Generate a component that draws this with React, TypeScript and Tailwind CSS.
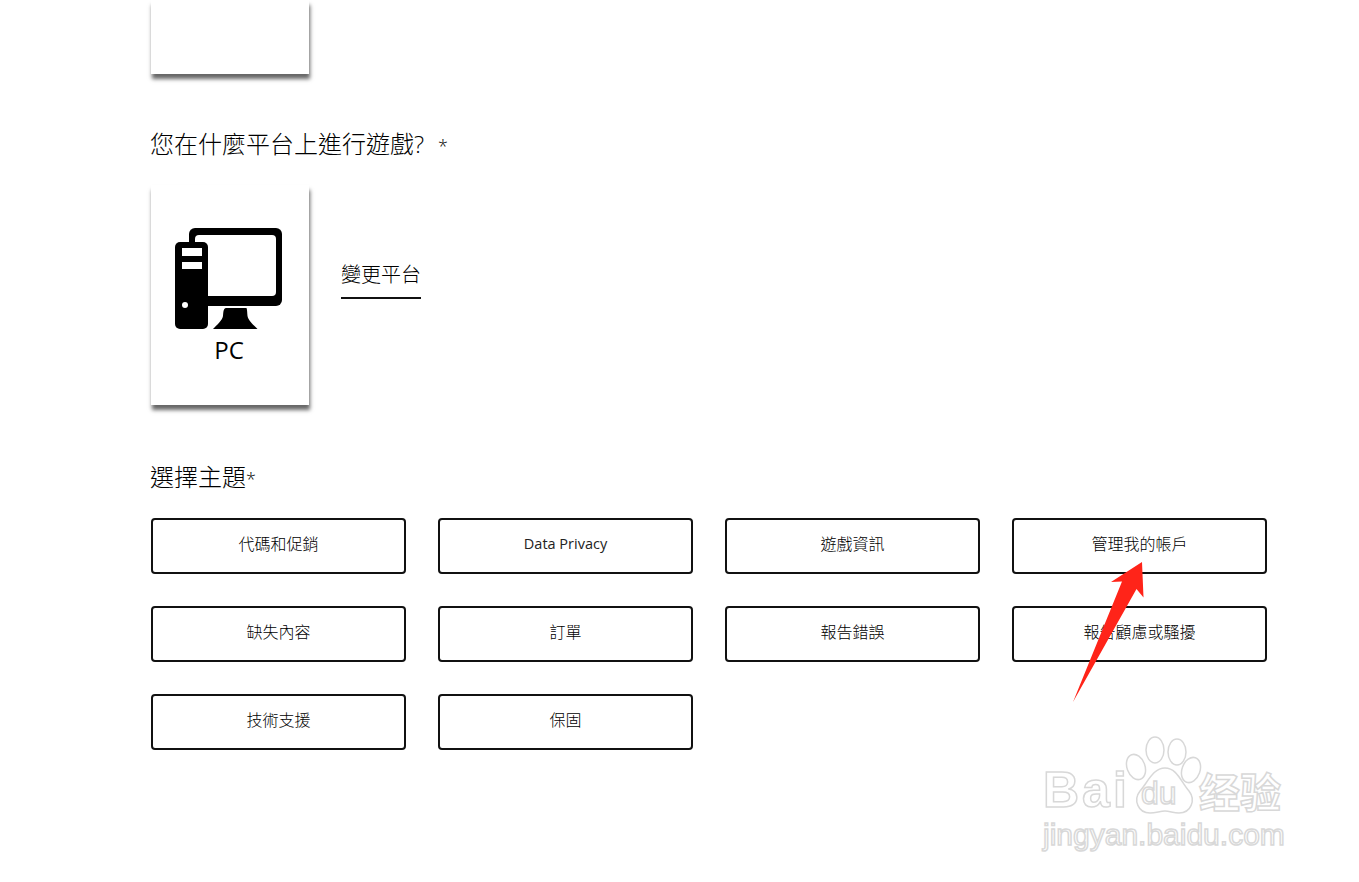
const FONT = "font-['Open_Sans','Noto_Sans_CJK_TC',sans-serif]"

const TOPICS = ['代碼和促銷', 'Data Privacy', '遊戲資訊', '管理我的帳戶', '缺失內容', '訂單', '報告錯誤', '報告顧慮或騷擾', '技術支援', '保固']

const cardShadow = 'shadow-[1px_5px_4px_rgba(0,0,0,0.6)]'

function PcIcon() {
  return (
    <svg width="108" height="102" viewBox="0 0 108 102" fill="#000">
      <rect x="14" y="0" width="93" height="78" rx="6" />
      <rect x="20" y="7" width="81" height="61" rx="4" fill="#fff" />
      <rect x="0" y="14" width="33" height="87" rx="5" />
      <rect x="7" y="20" width="20" height="8" fill="#fff" />
      <rect x="7" y="34" width="20" height="7" fill="#fff" />
      <circle cx="10" cy="77" r="3" fill="#fff" />
      <path d="M52 80h19c1 0 1 1 1.500 8 .5 4 6 9 10 13H38c4-4 9.500-9 10-13 .5-7 1-8 4-8z" />
    </svg>
  )
}

function Watermark() {
  const stroke = 'text-white [-webkit-text-stroke:1.5px_#d8d8d8]'
  return (
    <>
      <span className={`absolute left-[1043px] top-[758px] text-[50px] leading-[64px] tracking-[3px] font-bold font-['Liberation_Sans',sans-serif] ${stroke}`}>Bai</span>
      <svg className="absolute left-[1125px] top-[735px]" width="80" height="85" viewBox="0 0 80 85" fill="#fff" stroke="#d8d8d8" strokeWidth="1.5">
        <ellipse cx="11" cy="32" rx="9" ry="13" transform="rotate(-20 11 32)" />
        <ellipse cx="30" cy="15" rx="9" ry="13" />
        <ellipse cx="52" cy="17" rx="9" ry="13" />
        <ellipse cx="66" cy="35" rx="9" ry="13" transform="rotate(20 66 35)" />
        <path d="M40 33c12 0 16 14 24 23 7 9 2 22-10 22-6 0-9-2-14-2s-9 2-15 2C13 78 8 65 15 56c8-9 13-23 25-23z" />
      </svg>
      <span className={`absolute left-[1141px] top-[773px] text-[32px] leading-[40px] font-['Liberation_Sans',sans-serif] ${stroke}`}>du</span>
      <span className={`absolute left-[1199px] top-[765px] text-[41px] leading-[50px] font-bold font-['Noto_Sans_CJK_SC',sans-serif] ${stroke}`}>经验</span>
      <span className={`absolute left-[1043px] top-[815px] text-[30px] leading-[40px] font-['Liberation_Sans',sans-serif] ${stroke}`}>jingyan.baidu.com</span>
    </>
  )
}

export default function App() {
  return (
    <div className={`relative h-[882px] overflow-hidden bg-white pl-[151px] text-black ${FONT}`}>
      {/* carte coupée en haut */}
      <div className={`h-[74px] w-[158px] bg-white ${cardShadow}`} />

      <h2 className="mt-[54px] -ml-px text-2xl font-light leading-8">
        您在什麼平台上進行遊戲?<span className="ml-[14px] text-lg">*</span>
      </h2>

      <div className="mt-[25px] flex items-start gap-8">
        <div className={`flex h-[220px] w-[158px] flex-col items-center bg-white pt-[43px] ${cardShadow}`}>
          <div className="-ml-[2px]">
            <PcIcon />
          </div>
          <span className="mt-[4px] -ml-[2px] text-2xl leading-8 font-['Open_Sans',sans-serif]">PC</span>
        </div>
        <a className="mt-[76px] border-b-2 border-[#111] pb-2 text-xl font-light leading-7">變更平台</a>
      </div>

      <h2 className="mt-[56px] -ml-px text-2xl font-light leading-8">
        選擇主題<span className="text-lg">*</span>
      </h2>

      <div className="mt-[25px] grid grid-cols-[repeat(4,255px)] gap-8">
        {TOPICS.map(t => (
          <button
            key={t}
            className={`flex h-14 items-center justify-center rounded-[4px] border-2 border-[#111] bg-white pb-1 ${t === 'Data Privacy' ? 'text-[14.5px] font-normal text-[#222]' : 'text-base font-light'}`}
          >
            {t}
          </button>
        ))}
      </div>

      <svg className="absolute left-0 top-0 pointer-events-none" width="1359" height="882" fill="#ff2419">
        <path d="M1142 562 1143.500 597.500 1136.500 589 1073 702 1122 581.500 1111 582z" />
      </svg>

      <Watermark />
    </div>
  )
}
